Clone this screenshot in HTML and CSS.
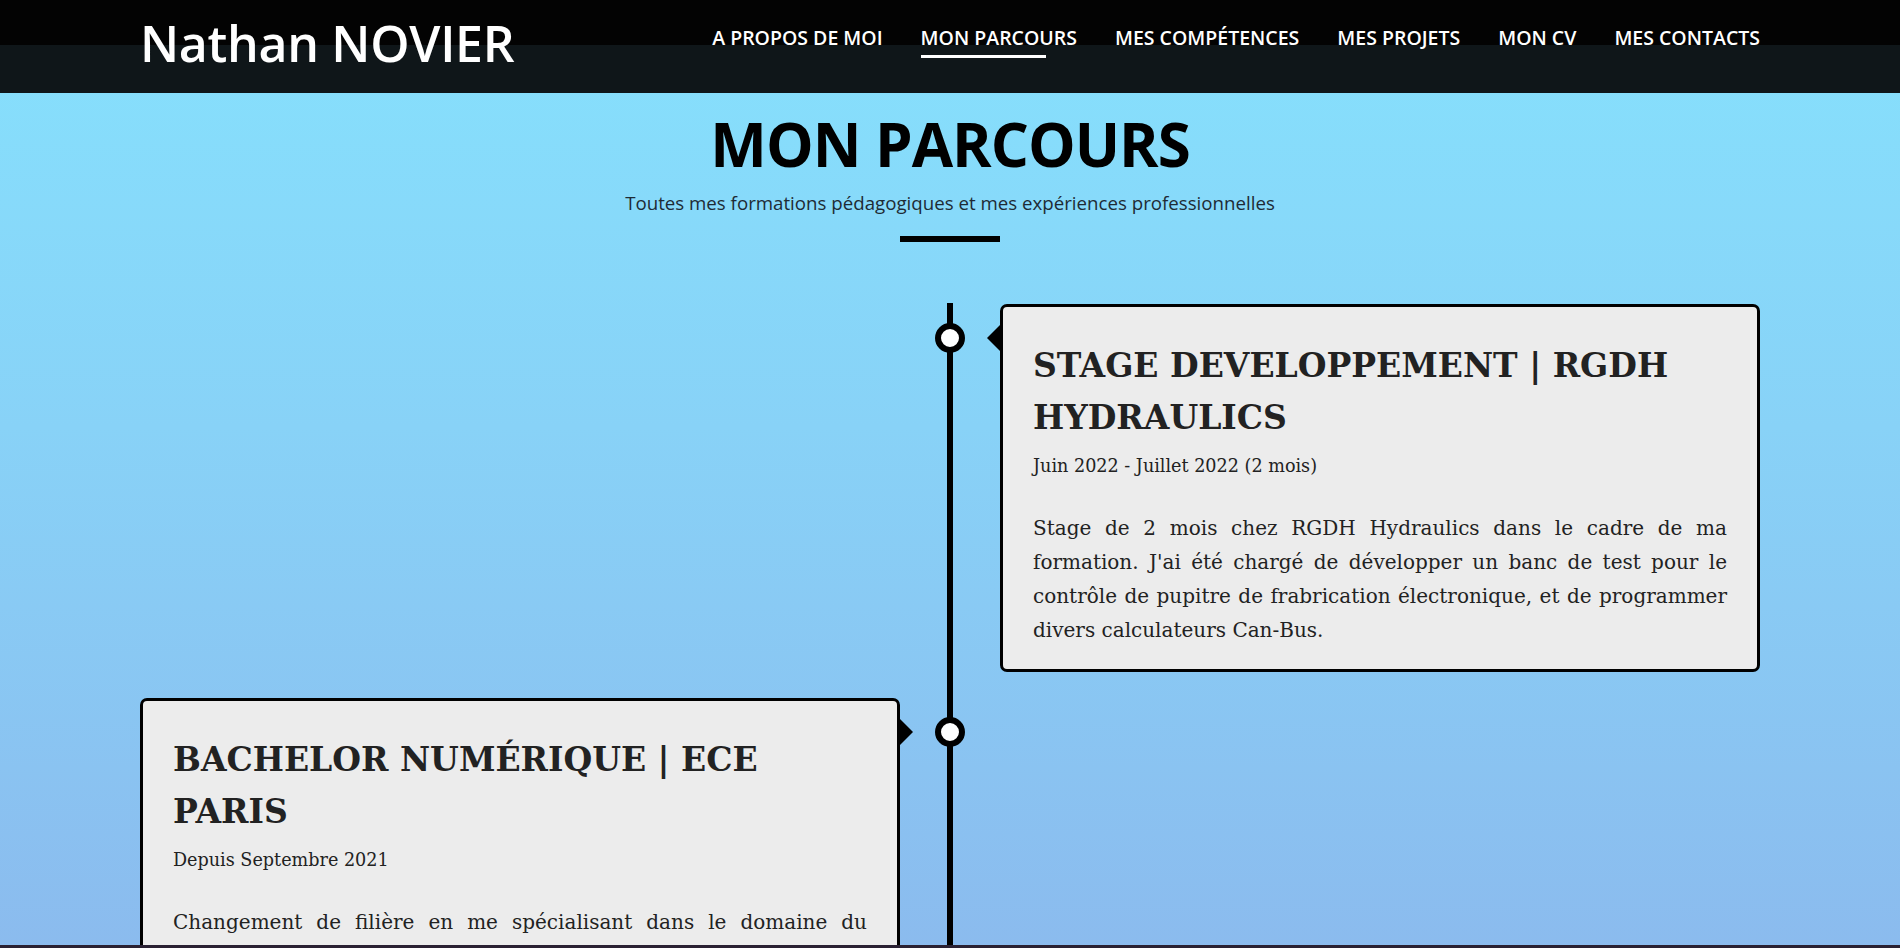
FILE: index.html
```html
<!DOCTYPE html>
<html lang="fr">
<head>
<meta charset="utf-8">
<title>Nathan NOVIER - Mon parcours</title>
<link rel="stylesheet" href="styles.css">
</head>
<body>
<header class="site-header">
  <div class="container header-inner">
    <a class="brand" href="#">Nathan NOVIER</a>
    <nav class="nav">
      <a href="#">A PROPOS DE MOI</a>
      <a href="#" class="active">MON PARCOURS</a>
      <a href="#">MES COMPÉTENCES</a>
      <a href="#">MES PROJETS</a>
      <a href="#">MON CV</a>
      <a href="#">MES CONTACTS</a>
    </nav>
  </div>
</header>
<main class="parcours">
  <div class="section-head">
    <h1>MON PARCOURS</h1>
    <p>Toutes mes formations pédagogiques et mes expériences professionnelles</p>
    <span class="bar"></span>
  </div>
  <div class="container timeline">
    <div class="tl-item tl-right">
      <span class="dot"></span>
      <article class="card">
        <h2>STAGE DEVELOPPEMENT | RGDH HYDRAULICS</h2>
        <div class="date">Juin 2022 - Juillet 2022 (2 mois)</div>
        <p>Stage de 2 mois chez RGDH Hydraulics dans le cadre de ma formation. J'ai été chargé de développer un banc de test pour le contrôle de pupitre de frabrication électronique, et de programmer divers calculateurs Can-Bus.</p>
      </article>
    </div>
    <div class="tl-item tl-left">
      <span class="dot"></span>
      <article class="card">
        <h2>BACHELOR NUMÉRIQUE | ECE PARIS</h2>
        <div class="date">Depuis Septembre 2021</div>
        <p>Changement de filière en me spécialisant dans le domaine du numérique et de l'informatique, où j'étudie de nouveaux domaines comme le développement web, la programmation et les réseaux.</p>
      </article>
    </div>
  </div>
</main>
</body>
</html>
```

FILE: styles.css
```css
* { box-sizing: border-box; }

html, body {
  margin: 0;
  padding: 0;
}

body {
  font-family: "Open Sans", "Noto Sans", sans-serif;
  background: linear-gradient(to bottom, #86e1fd 0%, #88d2f7 45%, #8bbbee 100%) fixed;
  color: #222;
  min-height: 100vh;
}

body::after {
  content: "";
  position: fixed;
  left: 0;
  right: 0;
  bottom: 0;
  height: 3px;
  background: #2a2133;
}

.container {
  width: 1620px;
  margin: 0 auto;
}

/* Header */
.site-header {
  height: 93px;
  background: linear-gradient(to bottom, #030303 0, #030303 45px, #0f1619 45px, #0f1619 100%);
}

.header-inner {
  display: flex;
  justify-content: space-between;
  align-items: flex-start;
}

.brand {
  margin-top: 13px;
  font-size: 50px;
  line-height: 60px;
  font-weight: 600;
  color: #fff;
  text-decoration: none;
  letter-spacing: -0.3px;
}

.nav {
  display: flex;
  gap: 38px;
  margin-top: 25px;
}

.nav a {
  position: relative;
  color: #fff;
  text-decoration: none;
  font-size: 19.5px;
  line-height: 26px;
  font-weight: 600;
}

.nav a.active::after {
  content: "";
  position: absolute;
  left: 0;
  top: 30px;
  width: 80%;
  height: 3px;
  background: #fff;
}

/* Section head */
.section-head {
  display: flex;
  flex-direction: column;
  align-items: center;
  padding-top: 14px;
}

.section-head h1 {
  margin: 0;
  font-size: 60px;
  line-height: 74px;
  font-weight: 700;
  color: #000;
  letter-spacing: -1px;
}

.section-head p {
  margin: 10px 0 0;
  font-size: 18.7px;
  line-height: 24px;
  color: #1e2b35;
}

.section-head .bar {
  display: block;
  margin-top: 21px;
  width: 100px;
  height: 6px;
  background: #000;
}

/* Timeline */
.timeline {
  position: relative;
  margin-top: 62px;
  display: flex;
  flex-direction: column;
  gap: 26px;
  padding-bottom: 60px;
}

.timeline::before {
  content: "";
  position: absolute;
  top: -1px;
  bottom: 0;
  left: 807px;
  width: 6px;
  background: #000;
}

.tl-item {
  position: relative;
  display: flex;
}

.tl-right { justify-content: flex-end; }
.tl-left { justify-content: flex-start; }

.dot {
  position: absolute;
  left: 795px;
  top: 19px;
  width: 30px;
  height: 30px;
  border: 6px solid #000;
  border-radius: 50%;
  background: #fff;
  z-index: 1;
}

.card {
  position: relative;
  width: 760px;
  background: #ececec;
  border: 3px solid #000;
  border-radius: 7px;
  padding: 33px 30px 22px;
  font-family: "DejaVu Serif", Georgia, serif;
  color: #222;
}

.card::before {
  content: "";
  position: absolute;
  top: 18px;
  width: 0;
  height: 0;
  border-top: 13px solid transparent;
  border-bottom: 13px solid transparent;
}

.tl-right .card::before {
  left: -16px;
  border-right: 13px solid #000;
}

.tl-left .card::before {
  right: -16px;
  border-left: 13px solid #000;
}

.card h2 {
  margin: 0;
  font-size: 33px;
  line-height: 52px;
  font-weight: 700;
  color: #222;
}

.card .date {
  margin-top: 10px;
  font-size: 17.6px;
  line-height: 24px;
}

.card p {
  margin: 33px 0 0;
  font-size: 20px;
  line-height: 34px;
  text-align: justify;
}
```
